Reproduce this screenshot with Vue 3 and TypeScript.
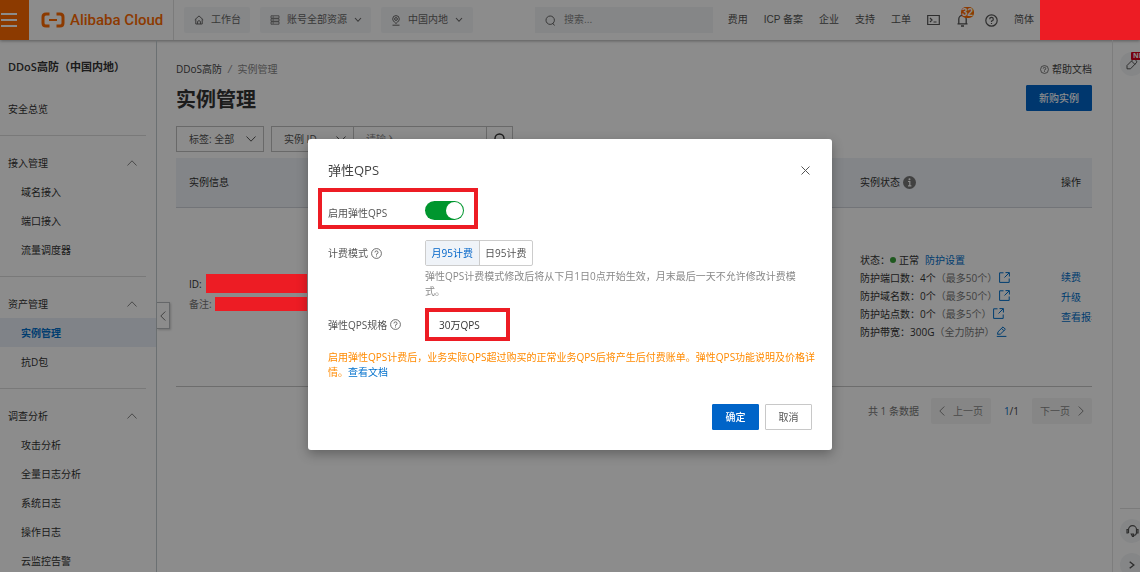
<script setup lang="ts">
import { ref } from 'vue'

interface NavItem {
  label: string
  active?: boolean
}
interface NavGroup {
  title: string
  items: NavItem[]
}
interface Quota {
  name: string
  value: string
  note: string
  action: 'open' | 'edit'
}

const navGroups: NavGroup[] = [
  { title: '接入管理', items: [{ label: '域名接入' }, { label: '端口接入' }, { label: '流量调度器' }] },
  { title: '资产管理', items: [{ label: '实例管理', active: true }, { label: '抗D包' }] },
  {
    title: '调查分析',
    items: [
      { label: '攻击分析' },
      { label: '全量日志分析' },
      { label: '系统日志' },
      { label: '操作日志' },
      { label: '云监控告警' },
    ],
  },
]

const topLinks: string[] = ['费用', 'ICP 备案', '企业', '支持', '工单']

const quotas: Quota[] = [
  { name: '防护端口数：', value: '4个', note: '（最多50个）', action: 'open' },
  { name: '防护域名数：', value: '0个', note: '（最多50个）', action: 'open' },
  { name: '防护站点数：', value: '0个', note: '（最多5个）', action: 'open' },
  { name: '防护带宽：', value: '300G', note: '（全力防护）', action: 'edit' },
]

const elasticEnabled = ref<boolean>(true)
const billingMode = ref<'month' | 'day'>('month')
</script>

<template>
  <div class="shell" lang="zh-CN">
    <header class="topbar">
      <button class="menu-btn" type="button" aria-label="菜单">
        <span></span><span></span><span></span>
      </button>
      <a class="brand" href="#">
        <svg width="24" height="16" viewBox="0 0 24 16" fill="none" stroke="currentColor" stroke-width="3">
          <path d="M8.500 2H5Q2 2 2 5V11Q2 14 5 14H8.500" />
          <path d="M15.500 2H19Q22 2 22 5V11Q22 14 19 14H15.500" />
          <path d="M8 8H16" stroke-width="2" />
        </svg>
        <span>Alibaba Cloud</span>
      </a>
      <button class="chip chip-home" type="button">
        <svg width="10" height="10" viewBox="0 0 10 10" fill="none" stroke="currentColor">
          <path d="M.8 4.800 5 .9 9.200 4.800M1.800 4.200V9H8.200V4.200M3.600 9V6.400Q5 4.800 6.400 6.400V9" />
        </svg>
        工作台
      </button>
      <button class="chip chip-res" type="button">
        <svg width="10" height="10" viewBox="0 0 10 10" fill="none" stroke="currentColor" stroke-width=".8">
          <path d="M1 .8H9V3.200H1ZM1 3.800H9V6.200H1ZM1 6.800H9V9.200H1ZM2.500 2H4M2.500 5H4M2.500 8H4" />
        </svg>
        账号全部资源
        <svg width="8" height="6" viewBox="0 0 8 6" fill="none" stroke="currentColor" stroke-width="1.100">
          <path d="M1 1 4 4.300 7 1" />
        </svg>
      </button>
      <button class="chip chip-region" type="button">
        <svg width="10" height="11" viewBox="0 0 10 11" fill="none" stroke="currentColor">
          <path d="M5 8.500C2.500 6.400 1.700 5.200 1.700 3.900A3.300 3.300 0 0 1 8.300 3.900C8.300 5.200 7.500 6.400 5 8.500ZM1.500 10.200H8.500" />
          <circle cx="5" cy="4" r="1.400" />
        </svg>
        中国内地
        <svg width="8" height="6" viewBox="0 0 8 6" fill="none" stroke="currentColor" stroke-width="1.100">
          <path d="M1 1 4 4.300 7 1" />
        </svg>
      </button>
      <label class="search">
        <svg width="11" height="11" viewBox="0 0 11 11" fill="none" stroke="currentColor">
          <circle cx="5.200" cy="5.200" r="4.200" />
          <path d="M7.500 8 9.500 10.500" />
        </svg>
        <input type="search" placeholder="搜索..." aria-label="搜索" />
      </label>
      <nav class="toplinks">
        <a v-for="link in topLinks" :key="link" href="#">{{ link }}</a>
        <a href="#" aria-label="命令行">
          <svg width="13" height="12" viewBox="0 0 13 12" fill="none" stroke="currentColor" stroke-width="1.200">
            <path d="M.7 1.500H12.300V10.500H.7ZM3 4 5 6 3 8M6.500 8H9.500" />
          </svg>
        </a>
        <a class="bell" href="#" aria-label="消息">
          <svg width="13" height="14" viewBox="0 0 13 14" fill="none" stroke="currentColor" stroke-width="1.300">
            <path d="M1.500 10.800H11.500M2.800 10.500V6A3.700 3.700 0 0 1 10.200 6V10.500M5 13H8" />
          </svg>
          <span class="bell-count">32</span>
        </a>
        <a href="#" aria-label="帮助">
          <svg width="13" height="13" viewBox="0 0 13 13" fill="none" stroke="currentColor" stroke-width="1.200">
            <circle cx="6.500" cy="6.500" r="5.700" />
            <path d="M4.700 5.200A1.800 1.800 0 1 1 6.500 7V8M6.500 8.900V10.100" />
          </svg>
        </a>
        <a href="#">简体</a>
      </nav>
      <div class="redact redact-user"></div>
    </header>

    <div class="body">
      <aside class="sidebar">
        <h2 class="side-title">DDoS高防（中国内地）</h2>
        <a class="side-row" href="#">安全总览</a>
        <section v-for="group in navGroups" :key="group.title" class="side-group">
          <button class="side-row side-head" type="button">
            {{ group.title }}
            <svg width="10" height="6" viewBox="0 0 10 6" fill="none" stroke="currentColor">
              <path d="M.5 5.500 5 .8 9.500 5.500" />
            </svg>
          </button>
          <a
            v-for="item in group.items"
            :key="item.label"
            class="side-row side-item"
            :class="{ active: item.active }"
            href="#"
            >{{ item.label }}</a
          >
        </section>
      </aside>

      <main class="main">
        <button class="collapse" type="button" aria-label="收起">
          <svg width="6" height="10" viewBox="0 0 6 10" fill="none" stroke="currentColor">
            <path d="M5.300 .5 .8 5 5.300 9.500" />
          </svg>
        </button>
        <div class="crumb-row">
          <div class="crumbs"><a href="#">DDoS高防</a><i>/</i><span>实例管理</span></div>
          <a class="help-link" href="#">
            <svg width="9" height="9" viewBox="0 0 13 13" fill="none" stroke="currentColor" stroke-width="1">
              <circle cx="6.500" cy="6.500" r="5.700" />
              <path d="M4.700 5.200A1.800 1.800 0 1 1 6.500 7V8M6.500 8.900V10.100" />
            </svg>
            帮助文档
          </a>
        </div>
        <div class="title-row">
          <h1>实例管理</h1>
          <button class="btn primary btn-new" type="button">新购实例</button>
        </div>
        <div class="filters">
          <div class="pick pick-tag">
            <select aria-label="标签"><option>标签: 全部</option></select>
            <svg width="10" height="6" viewBox="0 0 10 6" fill="none" stroke="currentColor"><path d="M.5 .5 5 5.200 9.500 .5" /></svg>
          </div>
          <div class="query">
            <div class="pick pick-field">
              <select aria-label="查询字段"><option>实例 ID</option></select>
              <svg width="10" height="6" viewBox="0 0 10 6" fill="none" stroke="currentColor"><path d="M.5 .5 5 5.200 9.500 .5" /></svg>
            </div>
            <input type="text" placeholder="请输入" aria-label="查询内容" />
            <button type="button" aria-label="查询">
              <svg width="11" height="12" viewBox="0 0 11 12" fill="none" stroke="currentColor" stroke-width="1.400">
                <circle cx="5.500" cy="5.500" r="4.500" />
                <path d="M8 9 10 11.500" />
              </svg>
            </button>
          </div>
        </div>

        <table class="grid">
          <colgroup>
            <col />
            <col class="col-status" />
            <col class="col-action" />
          </colgroup>
          <thead>
            <tr>
              <th>实例信息</th>
              <th>
                <span class="th-flex">
                  实例状态
                  <svg width="13" height="13" viewBox="0 0 13 13">
                    <circle cx="6.500" cy="6.500" r="6.500" fill="#777" />
                    <path d="M5 5.500H6.800V9.500M5 9.800H8.400" fill="none" stroke="#fff" stroke-width="1.200" />
                    <circle cx="6.500" cy="3.300" r="1" fill="#fff" />
                  </svg>
                </span>
              </th>
              <th>操作</th>
            </tr>
          </thead>
          <tbody>
            <tr>
              <td class="info">
                <div class="kv"><span>ID:</span><div class="redact redact-id"></div></div>
                <div class="kv"><span class="muted">备注:</span><div class="redact redact-note"></div></div>
              </td>
              <td class="status">
                <div class="line">
                  状态：<span class="dot"></span><b>正常</b><a class="settings" href="#">防护设置</a>
                </div>
                <div v-for="q in quotas" :key="q.name" class="line">
                  {{ q.name }}<b>{{ q.value }}</b><span class="muted">{{ q.note }}</span>
                  <a href="#" :aria-label="q.action === 'open' ? '查看' : '编辑'">
                    <svg v-if="q.action === 'open'" width="11" height="11" viewBox="0 0 11 11" fill="none" stroke="currentColor">
                      <path d="M4.500 .8H.6V10.400H10.200V6.500M6.500 .6H10.400V4.500M10.200 .8 5.500 5.500" />
                    </svg>
                    <svg v-else width="11" height="11" viewBox="0 0 11 11" fill="none" stroke="currentColor">
                      <path d="M.8 10.400H10.400M1.500 8.300 2 5.800 7 .9 9.400 3.300 4.400 8.100ZM5.600 2.400 7.900 4.700" />
                    </svg>
                  </a>
                </div>
              </td>
              <td class="actions">
                <a href="#">续费</a>
                <a href="#">升级</a>
                <a href="#">查看报表</a>
              </td>
            </tr>
          </tbody>
        </table>

        <div class="pager">
          <span class="total">共 1 条数据</span>
          <button type="button" disabled>
            <svg width="6" height="10" viewBox="0 0 6 10" fill="none" stroke="currentColor"><path d="M5.300 .5 .8 5 5.300 9.500" /></svg>
            上一页
          </button>
          <span class="pages"><a href="#">1</a>/1</span>
          <button type="button" disabled>
            下一页
            <svg width="6" height="10" viewBox="0 0 6 10" fill="none" stroke="currentColor"><path d="M.7 .5 5.200 5 .7 9.500" /></svg>
          </button>
        </div>
      </main>

      <aside class="rail">
        <button class="rail-btn" type="button" aria-label="反馈">
          <svg width="12" height="12" viewBox="0 0 12 12" fill="none" stroke="currentColor">
            <path d="M1 10.800V7.500L7 1.500Q8 .6 9 1.500L10.300 2.800Q11.300 3.800 10.300 4.800L4.500 10.800ZM5.500 3 9 6.500" />
          </svg>
          <span class="new-tag">NEW</span>
        </button>
        <div class="rail-bottom">
          <button class="rail-btn" type="button" aria-label="客服">
            <svg width="13" height="12" viewBox="0 0 13 12" fill="none" stroke="currentColor" stroke-width="1.200">
              <path d="M2.500 8V4.500A4 3.800 0 0 1 10.500 4.500V8M2.500 4.500H1V8H2.500M10.500 4.500H12V8H10.500M10.500 8Q10 10.500 7.500 10.500M5.300 9H7.500V11.300H6.500Z" />
            </svg>
          </button>
          <button class="rail-btn" type="button" aria-label="展开">
            <svg width="6" height="8" viewBox="0 0 6 8" fill="none" stroke="currentColor" stroke-width="1.400"><path d="M.7 .8 4.800 4 .7 7.200" /></svg>
          </button>
        </div>
      </aside>
    </div>

    <div class="backdrop"></div>
    <div class="dialog-layer">
      <section class="dialog" role="dialog" aria-modal="true" aria-labelledby="dlg-title">
        <div class="dialog-head">
          <h3 id="dlg-title">弹性QPS</h3>
          <button class="close" type="button" aria-label="关闭">
            <svg width="9" height="9" viewBox="0 0 9 9" fill="none" stroke="currentColor"><path d="M.5 .5 8.500 8.500M8.500 .5 .5 8.500" /></svg>
          </button>
        </div>

        <div class="row row-switch">
          <label for="elastic">启用弹性QPS</label>
          <input id="elastic" v-model="elasticEnabled" class="switch" type="checkbox" role="switch" />
          <span class="frame" aria-hidden="true"></span>
        </div>

        <div class="row row-mode">
          <span class="label">
            计费模式
            <svg width="11" height="11" viewBox="0 0 13 13" fill="none" stroke="currentColor" stroke-width="1">
              <circle cx="6.500" cy="6.500" r="5.800" />
              <path d="M4.700 5.200A1.800 1.800 0 1 1 6.500 7V8M6.500 8.900V10.100" />
            </svg>
          </span>
          <div class="segmented" role="group" aria-label="计费模式">
            <button type="button" :class="{ on: billingMode === 'month' }" @click="billingMode = 'month'">月95计费</button>
            <button type="button" :class="{ on: billingMode === 'day' }" @click="billingMode = 'day'">日95计费</button>
          </div>
          <p class="hint">弹性QPS计费模式修改后将从下月1日0点开始生效，月末最后一天不允许修改计费模式。</p>
        </div>

        <div class="row row-spec">
          <span class="label">
            弹性QPS规格
            <svg width="11" height="11" viewBox="0 0 13 13" fill="none" stroke="currentColor" stroke-width="1">
              <circle cx="6.500" cy="6.500" r="5.800" />
              <path d="M4.700 5.200A1.800 1.800 0 1 1 6.500 7V8M6.500 8.900V10.100" />
            </svg>
          </span>
          <span class="spec">30万QPS</span>
        </div>

        <p class="notice">
          启用弹性QPS计费后，业务实际QPS超过购买的正常业务QPS后将产生后付费账单。弹性QPS功能说明及价格详情。<a href="#">查看文档</a>
        </p>

        <div class="dialog-foot">
          <button class="btn primary" type="button">确定</button>
          <button class="btn" type="button">取消</button>
        </div>
      </section>
    </div>
  </div>
</template>

<style>
body {
  margin: 0;
  background: #fff;
}
</style>

<style scoped>
.shell {
  display: flex;
  flex-direction: column;
  height: 100vh;
  overflow: hidden;
  background: #fff;
  color: #333;
  font: 10px/18px "Open Sans", "Noto Sans CJK SC", sans-serif;
}
.shell *,
.shell *::before {
  box-sizing: border-box;
}
a {
  color: #0070cc;
  text-decoration: none;
}
button,
input,
select {
  margin: 0;
  padding: 0;
  border: 0;
  border-radius: 0;
  outline: 0;
  background: none;
  color: inherit;
  font: inherit;
}
h1,
h2,
h3,
p {
  margin: 0;
}
svg {
  display: block;
  flex: none;
}
.redact {
  position: relative;
  z-index: 11;
  background: #ed1c24;
}

/* Top bar */
.topbar {
  display: flex;
  align-items: center;
  flex: none;
  height: 40px;
  color: #666;
  font-family: "Liberation Sans", "Noto Sans CJK SC", sans-serif;
  box-shadow: 0 1px 3px rgba(0, 0, 0, 0.35);
}
.menu-btn {
  display: flex;
  flex-direction: column;
  justify-content: center;
  gap: 4px;
  width: 29px;
  height: 40px;
  background: #ff6a00;
}
.menu-btn span {
  width: 16px;
  height: 2px;
  margin-left: 1px;
  background: #fff;
}
.brand {
  display: flex;
  align-items: center;
  gap: 5px;
  width: 145px;
  height: 40px;
  padding-left: 12px;
  border-right: 1px solid #e0e0e0;
  color: #ff6a00;
  font: 500 15px/40px Roboto, sans-serif;
  white-space: nowrap;
}
.chip {
  display: flex;
  align-items: center;
  gap: 7px;
  height: 26px;
  margin-left: 10px;
  padding-left: 10px;
  border-radius: 2px;
  background: #f5f6f8;
  white-space: nowrap;
}
.chip-home {
  width: 66px;
}
.chip-res {
  width: 111px;
}
.chip-region {
  width: 92px;
}
.search {
  display: flex;
  flex: 1;
  align-items: center;
  gap: 8px;
  height: 26px;
  margin: 0 15px 0 62px;
  padding-left: 10px;
  background: #f2f4f6;
}
.search input {
  flex: 1;
  min-width: 0;
}
input::placeholder {
  color: #888;
  opacity: 1;
}
.toplinks {
  display: flex;
  align-items: center;
  gap: 16px;
  margin-right: 6px;
  white-space: nowrap;
}
.toplinks a {
  color: #555;
}
.bell {
  position: relative;
}
.bell-count {
  position: absolute;
  top: -6px;
  left: 5px;
  padding: 0 1px;
  border-radius: 5px;
  background: #ff6a00;
  color: #fff;
  font-size: 10px;
  font-weight: 700;
  line-height: 11px;
}
.redact-user {
  width: 100px;
  height: 40px;
}

/* Side navigation */
.body {
  display: flex;
  flex: 1;
  min-height: 0;
}
.sidebar {
  flex: none;
  width: 157px;
  overflow-y: auto;
  border-right: 1px solid #c4cccf;
  scrollbar-width: none;
}
.side-title {
  padding-left: 8px;
  font-size: 11px;
  font-weight: 600;
  line-height: 54px;
  white-space: nowrap;
}
.side-row {
  display: flex;
  align-items: center;
  width: 100%;
  height: 29px;
  padding-left: 8px;
  color: #333;
}
.side-row + .side-group {
  padding-top: 12px;
}
.side-group {
  padding-bottom: 12px;
}
.side-group::before {
  display: block;
  width: 146px;
  height: 1px;
  margin-bottom: 12px;
  background: #dcdcdc;
  content: "";
}
.side-head {
  justify-content: space-between;
  padding-right: 19px;
}
.side-head svg {
  color: #888;
}
.side-item {
  padding-left: 21px;
}
.side-item.active {
  background: #e9eff7;
  color: #0070cc;
  font-weight: 700;
}

/* Main panel */
.main {
  position: relative;
  flex: 1;
  min-width: 0;
  padding: 20px 20px 0 19px;
}
.collapse {
  position: absolute;
  top: 262px;
  left: 0;
  display: flex;
  align-items: center;
  justify-content: center;
  width: 13px;
  height: 27px;
  border: 1px solid #b8bcc0;
  border-left: 0;
  color: #777;
  box-shadow: 1px 1px 2px rgba(0, 0, 0, 0.2);
}
.crumb-row,
.title-row {
  display: flex;
  align-items: center;
  justify-content: space-between;
}
.crumbs a,
.help-link {
  color: #444;
}
.crumbs i {
  margin: 0 6px;
  color: #888;
}
.crumbs span {
  color: #888;
}
.help-link {
  display: flex;
  align-items: center;
  gap: 3px;
}
.title-row {
  align-items: flex-start;
  height: 26px;
  margin-top: 7px;
}
h1 {
  font-size: 20px;
  font-weight: 700;
  line-height: 30px;
}
.btn {
  width: 47px;
  height: 26px;
  border: 1px solid #c8c8c8;
  border-radius: 1px;
}
.primary {
  border-color: #0064c8;
  background: #0064c8;
  color: #fff;
  font-weight: 500;
}
.btn-new {
  width: 66px;
}
.filters {
  display: flex;
  gap: 7px;
  margin-top: 15px;
}
.pick {
  position: relative;
  display: flex;
  align-items: center;
}
.pick select {
  width: 100%;
  height: 100%;
  padding-left: 12px;
  appearance: none;
  color: #555;
}
.pick svg {
  position: absolute;
  right: 7px;
  color: #555;
  pointer-events: none;
}
.pick-tag {
  width: 88px;
  height: 26px;
  border: 1px solid #c0c0c0;
}
.query {
  display: flex;
  width: 242px;
  height: 26px;
  border: 1px solid #c0c0c0;
}
.pick-field {
  width: 81px;
}
.query input {
  flex: 1;
  min-width: 0;
  padding-left: 12px;
  border-left: 1px solid #c0c0c0;
}
.query button {
  display: flex;
  align-items: center;
  justify-content: center;
  width: 26px;
  border-left: 1px solid #c0c0c0;
}

/* Instance table */
.grid {
  width: 100%;
  margin-top: 6px;
  border-collapse: collapse;
  table-layout: fixed;
}
.col-status {
  width: 201px;
}
.col-action {
  width: 44px;
}
th,
td {
  padding: 0 0 0 13px;
  text-align: left;
}
th {
  height: 49px;
  border-bottom: 1px solid #d0d4da;
  background: #eff2f7;
  font-weight: 400;
}
.th-flex {
  display: flex;
  align-items: center;
  gap: 3px;
}
td {
  height: 179px;
  border-bottom: 1px solid #c6c6c6;
}
.info {
  padding-bottom: 6px;
}
.status {
  padding-bottom: 2px;
}
.kv {
  display: flex;
  align-items: center;
  height: 20px;
}
.kv span {
  flex: none;
}
.muted {
  color: #777;
}
.redact-id {
  width: 101px;
  height: 19px;
  margin-left: 4px;
}
.redact-note {
  width: 92px;
  height: 14px;
  margin-left: 3px;
}
.line {
  display: flex;
  align-items: center;
  height: 18px;
  white-space: nowrap;
}
.line b {
  font-weight: 400;
}
.line a {
  margin-left: 2px;
}
.line .settings {
  margin-left: 6px;
}
.dot {
  width: 6px;
  height: 6px;
  margin-right: 3px;
  border-radius: 50%;
  background: #3aa23a;
}
.actions {
  overflow: hidden;
}
.actions a {
  display: block;
  line-height: 20px;
  white-space: nowrap;
}
.pager {
  display: flex;
  align-items: center;
  justify-content: flex-end;
  margin-top: 11px;
  color: #777;
}
.pager button {
  display: flex;
  align-items: center;
  justify-content: center;
  gap: 8px;
  width: 60px;
  height: 26px;
  border-radius: 2px;
  background: #f5f5f5;
  color: #888;
}
.total {
  margin-right: 12px;
}
.pages {
  margin: 0 13px;
  color: #444;
}

/* Right tool rail */
.rail {
  display: flex;
  flex: none;
  flex-direction: column;
  justify-content: space-between;
  width: 28px;
  overflow: hidden;
  padding: 12px 0 0 7px;
  border-left: 1px solid #e4e4e4;
}
.rail-btn {
  position: relative;
  display: flex;
  align-items: center;
  justify-content: center;
  width: 24px;
  height: 24px;
  border-radius: 50%;
  background: #f2f4f6;
  color: #555;
}
.new-tag {
  position: absolute;
  top: 0;
  left: 11px;
  padding: 0 2px;
  border-radius: 1px;
  background: #d9001b;
  color: #fff;
  font-size: 7px;
  font-weight: 700;
  line-height: 8px;
}
.rail-bottom {
  display: flex;
  flex-direction: column;
  gap: 10px;
  margin-bottom: -5px;
  padding-top: 10px;
  border-top: 1px solid #e0e0e0;
}

/* Dialog */
.backdrop {
  position: fixed;
  inset: 0;
  z-index: 10;
  background: rgba(0, 0, 0, 0.45);
}
.dialog-layer {
  position: fixed;
  inset: 0;
  z-index: 12;
  display: flex;
  align-items: flex-start;
  justify-content: center;
  padding-top: 139px;
}
.dialog {
  width: 524px;
  padding: 20px;
  border-radius: 3px;
  background: #fff;
  color: #555;
  box-shadow: 0 4px 12px rgba(0, 0, 0, 0.3);
}
.dialog-head {
  display: flex;
  align-items: center;
  justify-content: space-between;
}
h3 {
  color: #444;
  font-size: 13px;
  font-weight: 400;
  line-height: 22px;
}
.close {
  padding: 2px;
}
.row {
  position: relative;
  display: grid;
  grid-template-columns: 97px 1fr;
  align-items: center;
}
.row-switch {
  align-items: end;
  margin-top: 20px;
  line-height: 14px;
}
.switch {
  display: flex;
  align-items: center;
  width: 39px;
  height: 19px;
  padding: 1px;
  border-radius: 10px;
  appearance: none;
  background: #bbb;
}
.switch::before {
  width: 17px;
  height: 17px;
  border-radius: 50%;
  background: #fff;
  content: "";
}
.switch:checked {
  justify-content: flex-end;
  background: #00962e;
}
.frame {
  position: absolute;
  top: -13px;
  left: -10px;
  width: 160px;
  height: 41px;
  border: 4px solid #ed1c24;
  pointer-events: none;
}
.row-mode {
  margin-top: 20px;
}
.label {
  display: flex;
  align-items: center;
  gap: 3px;
}
.segmented {
  display: flex;
  width: 108px;
  height: 26px;
  border: 1px solid #ccc;
  border-radius: 2px;
}
.segmented button {
  flex: 1;
}
.segmented button + button {
  border-left: 1px solid #ccc;
}
.segmented .on {
  background: #eff3f8;
  color: #0064c8;
}
.hint {
  grid-column: 2;
  max-width: 376px;
  margin-top: 3px;
  color: #888;
  line-height: 15px;
}
.row-spec {
  margin-top: 9px;
}
.spec {
  display: flex;
  align-items: center;
  width: 85px;
  height: 33px;
  padding-left: 10px;
  border: 4px solid #ed1c24;
  color: #333;
}
.notice {
  margin: 9px -8px 0 0;
  color: #ff8a00;
  line-height: 15px;
}
.dialog-foot {
  display: flex;
  justify-content: flex-end;
  gap: 6px;
  margin-top: 24px;
}
</style>
